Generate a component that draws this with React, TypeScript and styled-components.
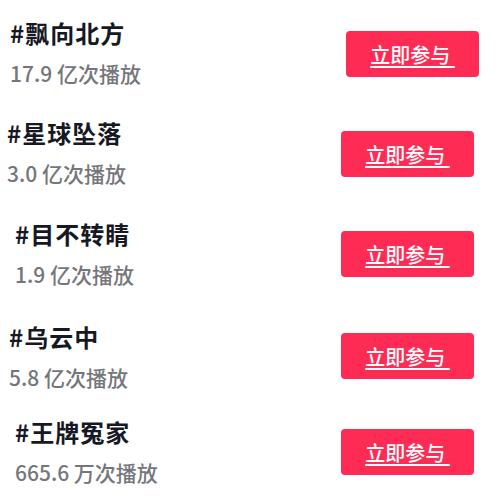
import styled, { createGlobalStyle } from "styled-components"

const GlobalStyle = createGlobalStyle`
  html, body {
    margin: 0;
    padding: 0;
    background: #ffffff;
  }
  body {
    font-family: "Noto Sans CJK SC", "Noto Sans", sans-serif;
  }
`

const List = styled.div`
  width: 500px;
  height: 500px;
  overflow: hidden;
  background: #ffffff;
`

const Row = styled.div`
  display: flex;
  justify-content: space-between;
  align-items: flex-start;
  height: 100px;
`

const Info = styled.div<{ $left: number; $top: number }>`
  display: flex;
  flex-direction: column;
  gap: 11px;
  padding-left: ${(p) => p.$left}px;
  padding-top: ${(p) => p.$top}px;
`

const Title = styled.div`
  font-size: 24px;
  line-height: 30px;
  font-weight: 700;
  letter-spacing: 1px;
  color: #161823;
`

const Plays = styled.div`
  font-size: 21px;
  line-height: 28px;
  font-weight: 500;
  color: #75767b;
`

const JoinButton = styled.button<{ $top: number; $right: number }>`
  display: flex;
  align-items: center;
  justify-content: center;
  width: 133px;
  height: 46px;
  margin-top: ${(p) => p.$top}px;
  margin-right: ${(p) => p.$right}px;
  padding: 0;
  border: none;
  border-radius: 4px;
  background: #fe2c55;
  color: #ffffff;
  font-family: "Noto Sans CJK SC", sans-serif;
  font-size: 20px;
  font-weight: 500;
  text-decoration: underline;
  text-underline-offset: 3px;
  cursor: pointer;
`

const topics = [
  { title: "#飘向北方", plays: "17.9 亿次播放", left: 10, top: 18, btnTop: 31, btnRight: 21 },
  { title: "#星球坠落", plays: "3.0 亿次播放", left: 7, top: 18, btnTop: 31, btnRight: 26 },
  { title: "#目不转睛", plays: "1.9 亿次播放", left: 15, top: 19, btnTop: 31, btnRight: 26 },
  { title: "#乌云中", plays: "5.8 亿次播放", left: 9, top: 22, btnTop: 33, btnRight: 26 },
  { title: "#王牌冤家", plays: "665.6 万次播放", left: 15, top: 17, btnTop: 29, btnRight: 26 },
]

export default function App() {
  return (
    <>
      <GlobalStyle />
      <List>
        {topics.map((t) => (
          <Row key={t.title}>
            <Info $left={t.left} $top={t.top}>
              <Title>{t.title}</Title>
              <Plays>{t.plays}</Plays>
            </Info>
            <JoinButton $top={t.btnTop} $right={t.btnRight}>立即参与&nbsp;</JoinButton>
          </Row>
        ))}
      </List>
    </>
  )
}
